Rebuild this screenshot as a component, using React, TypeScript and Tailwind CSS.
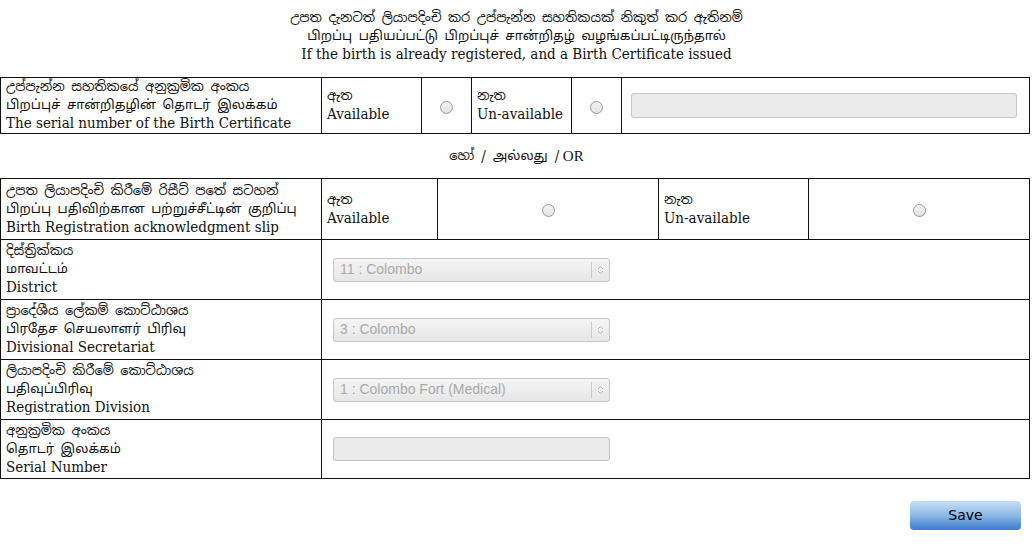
import React from "react";

const si = "font-['Noto_Sans_Sinhala','Noto_Sans_Tamil','Noto_Sans',sans-serif] text-[13px] leading-[18px]";
const en = "font-['DejaVu_Serif_Condensed','DejaVu_Serif',serif] font-stretch-condensed text-[15px] leading-[19px]";

function Radio() {
  return (
    <span className="inline-block w-[13px] h-[13px] rounded-full border border-[#9a9a9a] bg-[linear-gradient(#f2f4f2,#dfe3df)] align-middle" />
  );
}

function Label({ a, b, c }: { a: string; b: string; c: string }) {
  return (
    <div className="pl-[5px] text-[#111]">
      <div className={si}>{a}</div>
      <div className={si}>{b}</div>
      <div className={en}>{c}</div>
    </div>
  );
}

function AvailLabel({ s, e }: { s: string; e: string }) {
  return (
    <div className="pl-[5px] text-[#111]">
      <div className={`${si} text-[12px] leading-[16px]`}>{s}</div>
      <div className={en}>{e}</div>
    </div>
  );
}

function Select({ value }: { value: string }) {
  return (
    <div className="ml-[11px] w-[277px] h-[24px] flex items-center rounded-[3px] border border-[#c6c6c6] bg-[linear-gradient(#f5f5f5,#e6e6e6)] font-['Liberation_Sans',sans-serif] text-[14px] text-[#a9a9a9]">
      <span className="flex-1 pl-[6px] truncate">{value}</span>
      <span className="w-[18px] h-[16px] border-l border-[#c9c9c9] flex items-center justify-center">
        <svg width="7" height="10" viewBox="0 0 7 10" fill="none" stroke="#b5b5b5" strokeWidth="1">
          <path d="M1 4 L3.5 1.5 L6 4" />
          <path d="M1 6 L3.5 8.5 L6 6" />
        </svg>
      </span>
    </div>
  );
}

export default function App() {
  const td = "border border-[#111] p-0 align-middle";
  return (
    <div className="w-[1033px] h-[546px] bg-white text-[#111]">
      <div className="pt-[9px] flex flex-col items-center text-center">
        <div className={si}>උපත දැනටත් ලියාපදිංචි කර උප්පැන්න සහතිකයක් නිකුත් කර ඇතිනම්</div>
        <div className={si}>பிறப்பு பதியப்பட்டு பிறப்புச் சான்றிதழ் வழங்கப்பட்டிருந்தால்</div>
        <div className={en}>If the birth is already registered, and a Birth Certificate issued</div>
      </div>

      <table className="mt-[13px] w-[1030px] table-fixed border-collapse">
        <colgroup>
          <col className="w-[321px]" />
          <col className="w-[100px]" />
          <col className="w-[50px]" />
          <col className="w-[100px]" />
          <col className="w-[50px]" />
          <col />
        </colgroup>
        <tbody>
          <tr className="h-[56px]">
            <td className={td}>
              <Label
                a="උප්පැන්න සහතිකයේ අනුක්‍රමික අංකය"
                b="பிறப்புச் சான்றிதழின் தொடர் இலக்கம்"
                c="The serial number of the Birth Certificate"
              />
            </td>
            <td className={td}>
              <AvailLabel s="ඇත" e="Available" />
            </td>
            <td className={`${td} text-center`}>
              <Radio />
            </td>
            <td className={td}>
              <AvailLabel s="නැත" e="Un-available" />
            </td>
            <td className={`${td} text-center`}>
              <Radio />
            </td>
            <td className={td}>
              <div className="ml-[9px] mr-[12px] h-[25px] rounded-[3px] border border-[#c4c4c4] bg-[#ebebeb]" />
            </td>
          </tr>
        </tbody>
      </table>

      <div className={`h-[44px] flex items-center justify-center ${si}`}>
        <span>හෝ / அல்லது / </span>
        <span className="text-[15px] ml-[3px] font-['Liberation_Serif',serif]">OR</span>
      </div>

      <table className="w-[1030px] table-fixed border-collapse">
        <colgroup>
          <col className="w-[321px]" />
          <col className="w-[116px]" />
          <col className="w-[221px]" />
          <col className="w-[150px]" />
          <col />
        </colgroup>
        <tbody>
          <tr className="h-[61px]">
            <td className={td}>
              <Label
                a="උපත ලියාපදිංචි කිරීමේ රිසීට් පතේ සටහන්"
                b="பிறப்பு பதிவிற்கான பற்றுச்சீட்டின் குறிப்பு"
                c="Birth Registration acknowledgment slip"
              />
            </td>
            <td className={td}>
              <AvailLabel s="ඇත" e="Available" />
            </td>
            <td className={`${td} text-center`}>
              <Radio />
            </td>
            <td className={td}>
              <AvailLabel s="නැත" e="Un-available" />
            </td>
            <td className={`${td} text-center`}>
              <Radio />
            </td>
          </tr>
          {[
            ["දිස්ත්‍රික්කය", "மாவட்டம்", "District", "11 : Colombo"],
            ["ප්‍රාදේශීය ලේකම් කොට්ඨාශය", "பிரதேச செயலாளர் பிரிவு", "Divisional Secretariat", "3 : Colombo"],
            ["ලියාපදිංචි කිරීමේ කොට්ඨාශය", "பதிவுப்பிரிவு", "Registration Division", "1 : Colombo Fort (Medical)"],
          ].map(([a, b, c, v]) => (
            <tr key={c} className="h-[60px]">
              <td className={td}>
                <Label a={a} b={b} c={c} />
              </td>
              <td className={td} colSpan={4}>
                <Select value={v} />
              </td>
            </tr>
          ))}
          <tr className="h-[59px]">
            <td className={td}>
              <Label a="අනුක්‍රමික අංකය" b="தொடர் இலக்கம்" c="Serial Number" />
            </td>
            <td className={td} colSpan={4}>
              <div className="ml-[11px] w-[277px] h-[24px] rounded-[3px] border border-[#c4c4c4] bg-[#ebebeb]" />
            </td>
          </tr>
        </tbody>
      </table>

      <div className="flex justify-end pr-[12px] pt-[22px]">
        <button className="w-[111px] h-[29px] rounded-[4px] bg-[linear-gradient(#c8e0f4,#8cb8e6_50%,#3a7ccc)] font-['DejaVu_Sans',sans-serif] text-[14px] text-black">
          Save
        </button>
      </div>
    </div>
  );
}
